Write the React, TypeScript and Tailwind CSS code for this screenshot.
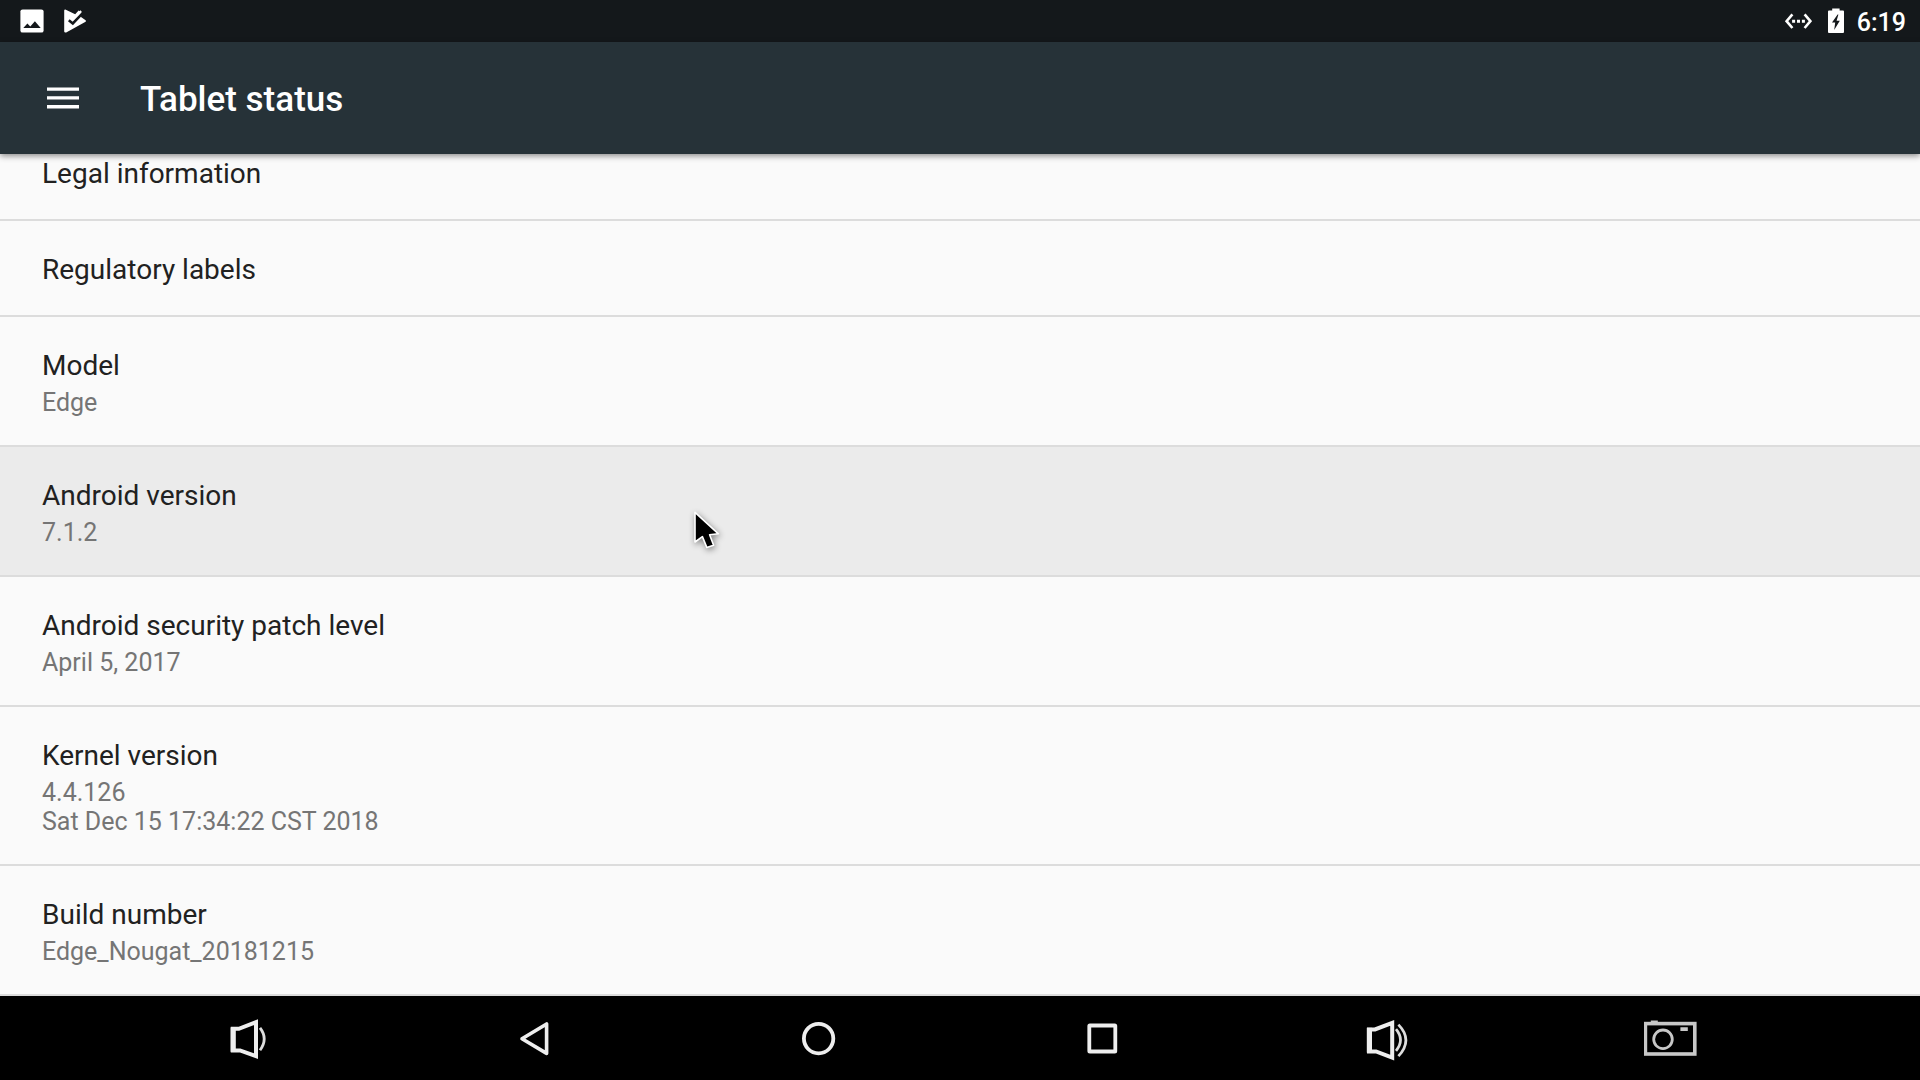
import React from 'react';

interface StatusItem {
  title: string;
  summary?: string[];
  active?: boolean;
}

const items: StatusItem[] = [
  { title: 'Legal information' },
  { title: 'Regulatory labels' },
  { title: 'Model', summary: ['Edge'] },
  { title: 'Android version', summary: ['7.1.2'], active: true },
  { title: 'Android security patch level', summary: ['April 5, 2017'] },
  { title: 'Kernel version', summary: ['4.4.126', 'Sat Dec 15 17:34:22 CST 2018'] },
  { title: 'Build number', summary: ['Edge_Nougat_20181215'] },
];

const PictureIcon = () => (
  <svg viewBox="0 0 24 24" className="h-6 w-6">
    <rect x="0.4" y="0.4" width="23.2" height="23.2" rx="2.2" fill="#fff" />
    <path d="M3.3 19 7.4 14.6 10.3 17.4 14.9 12.2 20.7 19Z" fill="#14181b" />
  </svg>
);

const PlayCheckIcon = () => (
  <svg viewBox="0 0 24 24" className="h-6 w-6">
    <path
      d="M1.3 0.6 11.2 5.2 14.6 1.4 17.6 3.4 17 8 21.6 11.2Q22.4 12 21.6 12.7L2.2 23.4Q0.4 24 0.2 22.4V1.6Q0.3 0.5 1.3 0.6Z"
      fill="#fff"
    />
    <path d="M4.8 11.2 8.8 14.4 18.4 4.4" fill="none" stroke="#14181b" strokeWidth="2.6" />
    <path d="M8.3 9.6 16.4 1.2 17.8 2.7 9.2 11.4Z" fill="#fff" />
  </svg>
);

const EthernetIcon = () => (
  <svg viewBox="0 0 28 24" className="h-6 w-7">
    <path d="M8.4 5.4 2.6 12.2 8.4 19M20.6 5.4 26.4 12.2 20.6 19" fill="none" stroke="#fff" strokeWidth="2.6" />
    <path d="M8.1 10.8h3v3h-3zM13 10.8h3v3h-3zM17.9 10.8h3v3h-3z" fill="#fff" />
  </svg>
);

const BatteryIcon = () => (
  <svg viewBox="0 0 18 26" className="h-[26px] w-[18px]">
    <path d="M5.2 0.4h7.4v2H16q1 0 1 1V24q0 1-1 1H2q-1 0-1-1V3.4q0-1 1-1h3.2z" fill="#fff" />
    <path d="M10.6 6.6 5 14.6h3.2L7.2 22 12.8 12.8H9.6L11.4 6.6Z" fill="#14181b" />
  </svg>
);

const MenuIcon = () => (
  <svg viewBox="0 0 32 22" className="h-[22px] w-8">
    <path d="M0 0.4h32v3.4H0zM0 9.2h32v3.4H0zM0 18h32v3.4H0z" fill="#fff" />
  </svg>
);

const VolumeDownIcon = () => (
  <svg viewBox="0 0 56 56" className="h-14 w-14" fill="none" stroke="#eee">
    <path d="M12.8 18.8h6L36 12.2V46.2L20 40.4H12.8Z" strokeWidth="4" />
    <path d="M13.2 17.4v24.4" strokeWidth="5.2" />
    <path d="M40 17.8Q48.4 28.6 40 40.2" strokeWidth="2.8" stroke="#ddd" />
  </svg>
);

const BackIcon = () => (
  <svg viewBox="0 0 56 56" className="h-14 w-14" fill="none" stroke="#eee">
    <path d="M17 28.7 41.6 14V43.4Z" strokeWidth="3.6" strokeLinejoin="round" />
  </svg>
);

const HomeIcon = () => (
  <svg viewBox="0 0 56 56" className="h-14 w-14" fill="none" stroke="#eee">
    <circle cx="28.6" cy="28.6" r="14.7" strokeWidth="3.8" />
  </svg>
);

const RecentsIcon = () => (
  <svg viewBox="0 0 56 56" className="h-14 w-14" fill="none" stroke="#eee">
    <rect x="15.3" y="15.5" width="26" height="26" rx="0.6" strokeWidth="3.8" />
  </svg>
);

const VolumeUpIcon = () => (
  <svg viewBox="0 0 56 56" className="h-14 w-14" fill="none" stroke="#eee">
    <path d="M10 19.4h6L33.2 13V47.6L17 41.4H10Z" strokeWidth="4" />
    <path d="M10.4 17.8v24.8" strokeWidth="5.2" />
    <path d="M37 19.2Q46 30 37 40.8" strokeWidth="2.7" stroke="#ddd" />
    <path d="M39.4 14.6Q54.4 30 39.4 46.2" strokeWidth="2.7" stroke="#ddd" />
  </svg>
);

const CameraIcon = () => (
  <svg viewBox="0 0 56 56" className="h-14 w-14" fill="none" stroke="#c8c8c8">
    <rect x="1.4" y="13.6" width="49.4" height="30.4" strokeWidth="3.6" />
    <circle cx="19" cy="29.3" r="9.3" strokeWidth="2.8" />
    <path d="M6.8 10.6h7v2h-7zM36.4 17.2h7.4v3.8h-7.4z" fill="#c8c8c8" stroke="none" />
  </svg>
);

const navButtons = [
  { label: 'Volume down', Icon: VolumeDownIcon },
  { label: 'Back', Icon: BackIcon },
  { label: 'Home', Icon: HomeIcon },
  { label: 'Recent apps', Icon: RecentsIcon },
  { label: 'Volume up', Icon: VolumeUpIcon },
  { label: 'Screenshot', Icon: CameraIcon },
];

const Pointer = () => (
  <svg
    viewBox="0 0 28 40"
    className="pointer-events-none absolute top-16 left-[692px] h-10 w-7 drop-shadow-[1px_2px_3px_rgba(0,0,0,0.45)]"
  >
    <path
      d="M3 1.4V31L10.4 25.6 14.8 36.4 21.6 34.2 17.6 23.8 26.4 22.8Z"
      fill="#000"
      stroke="#fff"
      strokeWidth="1.6"
      strokeLinejoin="round"
    />
  </svg>
);

const StatusRow: React.FC<{ item: StatusItem }> = ({ item }) => (
  <li className={`relative border-b-2 border-[#dcdcdc] ${item.active ? 'bg-[#ebebeb]' : ''}`}>
    <button type="button" className="block w-full px-[42px] pt-8 pb-7 text-left">
      <span className="block text-[28px] leading-[34px] text-[#212121]">{item.title}</span>
      {item.summary && (
        <span className="mt-[5px] block text-[25px] leading-[29px] text-[#757575]">
          {item.summary.map((line) => (
            <span key={line} className="block">
              {line}
            </span>
          ))}
        </span>
      )}
    </button>
    {item.active && <Pointer />}
  </li>
);

const App: React.FC = () => {
  return (
    <div className="flex h-screen flex-col bg-[#fafafa] font-['Roboto',sans-serif]">
      {/* System status bar */}
      <div className="flex h-[42px] shrink-0 items-center justify-between bg-[#14181b] pr-[14px] pl-5 text-white">
        <div className="flex items-center gap-5">
          <PictureIcon />
          <PlayCheckIcon />
        </div>
        <div className="flex items-center">
          <EthernetIcon />
          <span className="mr-3 ml-[15px]">
            <BatteryIcon />
          </span>
          <span className="pt-0.5 text-[25px] leading-[29px] font-medium">6:19</span>
        </div>
      </div>

      <header className="z-10 flex h-28 shrink-0 items-center bg-[#263238] px-[47px] shadow-[0_2px_6px_rgba(0,0,0,0.45)]">
        <button type="button" aria-label="Open menu">
          <MenuIcon />
        </button>
        <h1 className="ml-[61px] pt-0.5 text-[35px] leading-[41px] font-medium text-white">Tablet status</h1>
      </header>

      {/* List is scrolled to its end */}
      <main className="flex min-h-0 flex-1 flex-col justify-end overflow-hidden">
        <ul>
          {items.map((item) => (
            <StatusRow key={item.title} item={item} />
          ))}
        </ul>
      </main>

      <nav className="grid h-[84px] shrink-0 grid-cols-6 bg-black px-[106px]">
        {navButtons.map(({ label, Icon }) => (
          <button key={label} type="button" aria-label={label} className="flex items-center justify-center">
            <Icon />
          </button>
        ))}
      </nav>
    </div>
  );
};

export default App;
